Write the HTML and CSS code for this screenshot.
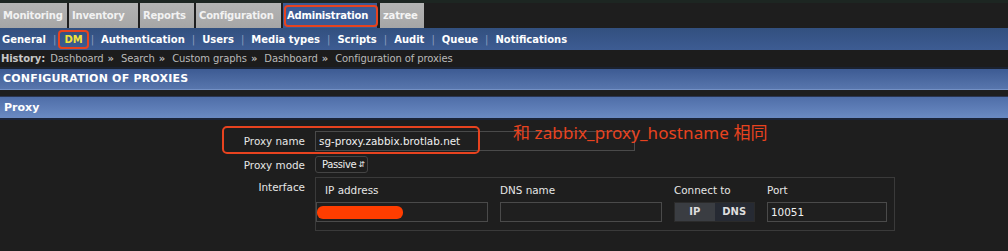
FILE: index.html
```html
<!DOCTYPE html>
<html lang="en">
<head>
    <meta charset="UTF-8">
    <title>Configuration of proxies</title>
    <link rel="stylesheet" href="styles.css">
</head>
<body>

<div class="top-strip"></div>
<div class="main-tabs">
    <div class="main-tab">Monitoring</div>
    <div class="main-tab">Inventory</div>
    <div class="main-tab">Reports</div>
    <div class="main-tab">Configuration</div>
    <div class="main-tab active">Administration<span class="mark mark-tab"></span></div>
    <div class="main-tab">zatree</div>
</div>

<div class="sub-menu">
    <span class="sub-item">General</span><span class="sep">|</span>
    <span class="sub-item current">DM<span class="mark mark-dm"></span></span><span class="sep">|</span>
    <span class="sub-item">Authentication</span><span class="sep">|</span>
    <span class="sub-item">Users</span><span class="sep">|</span>
    <span class="sub-item">Media types</span><span class="sep">|</span>
    <span class="sub-item">Scripts</span><span class="sep">|</span>
    <span class="sub-item">Audit</span><span class="sep">|</span>
    <span class="sub-item">Queue</span><span class="sep">|</span>
    <span class="sub-item">Notifications</span>
</div>

<div class="history">
    <b>History:</b>
    <span>Dashboard</span><i>&raquo;</i>
    <span>Search</span><i>&raquo;</i>
    <span>Custom graphs</span><i>&raquo;</i>
    <span>Dashboard</span><i>&raquo;</i>
    <span>Configuration of proxies</span>
</div>

<div class="page-header">CONFIGURATION OF PROXIES</div>
<div class="form-header">Proxy</div>

<div class="form-body">
    <div class="form-row row-name">
        <label class="form-label">Proxy name</label>
        <div class="form-field">
            <div class="text-input wide">sg-proxy.zabbix.brotlab.net</div>
        </div>
        <span class="mark mark-name"></span>
        <span class="note">和 zabbix_proxy_hostname 相同</span>
    </div>
    <div class="form-row row-mode">
        <label class="form-label">Proxy mode</label>
        <div class="form-field">
            <div class="select-box">Passive<span class="arrows">&#8693;</span></div>
        </div>
    </div>
    <div class="form-row">
        <label class="form-label">Interface</label>
        <div class="form-field">
            <div class="iface">
                <div class="iface-col col-ip">
                    <div class="iface-head">IP address</div>
                    <div class="text-input"><span class="redact"></span></div>
                </div>
                <div class="iface-col col-dns">
                    <div class="iface-head">DNS name</div>
                    <div class="text-input"></div>
                </div>
                <div class="iface-col col-conn">
                    <div class="iface-head">Connect to</div>
                    <div class="toggle"><span class="on">IP</span><span>DNS</span></div>
                </div>
                <div class="iface-col col-port">
                    <div class="iface-head">Port</div>
                    <div class="text-input">10051</div>
                </div>
            </div>
        </div>
    </div>
</div>

</body>
</html>
```

FILE: styles.css
```css
body {
    margin: 0;
    padding: 0;
    background-color: #1e1e1e;
    font-family: "DejaVu Sans", Verdana, sans-serif;
    font-size: 11px;
    color: #e0e0e0;
    overflow: hidden;
}
.top-strip {
    height: 3px;
    background-color: #1d2622;
}
.main-tabs {
    display: flex;
    height: 25px;
    gap: 2px;
}
.main-tab {
    position: relative;
    background: linear-gradient(#b4b4b4, #a6a6a6);
    color: #f2f2f2;
    font-weight: bold;
    font-size: 10px;
    letter-spacing: -0.2px;
    line-height: 25px;
    padding: 0 3px;
}
.main-tab:nth-child(1) { width: 61px; }
.main-tab:nth-child(2) { width: 63px; }
.main-tab:nth-child(3) { width: 48px; }
.main-tab:nth-child(4) { width: 79px; }
.main-tab.active {
    width: 86px;
    background: #3c5a93;
    color: #fff;
    padding: 0 4px;
}
.main-tab:nth-child(6) {
    width: 38px;
    margin-left: 1px;
    color: #f4f4f4;
}
.mark {
    position: absolute;
    border: 2px solid #e8431f;
    border-radius: 4px;
    pointer-events: none;
}
.mark-tab {
    left: 1px;
    right: -1px;
    top: 2px;
    bottom: 1px;
}
.sub-menu {
    height: 22px;
    display: flex;
    align-items: center;
    padding-left: 2px;
    background: linear-gradient(#32507f, #3d5c93);
    color: #fff;
    font-weight: bold;
    font-size: 10px;
}
.sub-item {
    position: relative;
}
.sub-item.current {
    color: #f2e23a;
    padding: 0 1px;
}
.mark-dm {
    left: -5px;
    right: -5px;
    top: -4px;
    bottom: -4px;
}
.sep {
    color: #8a9cbd;
    font-weight: normal;
    padding: 0 7px;
}
.history {
    height: 17px;
    line-height: 17px;
    padding-left: 1px;
    background-color: #1c1c1c;
    color: #b9b9b9;
    font-size: 10px;
    letter-spacing: -0.1px;
    border-bottom: 2px solid #1b2230;
}
.history b {
    color: #c7c7c7;
    margin-right: 2px;
}
.history i {
    font-style: normal;
    font-weight: bold;
    margin: 0 4px;
}
.page-header {
    height: 20px;
    line-height: 20px;
    padding-left: 3px;
    background: linear-gradient(#3d5b93, #5876ad);
    border-bottom: 1px solid #7390c4;
    color: #fff;
    font-weight: bold;
    font-size: 11px;
    letter-spacing: 0.2px;
}
.form-header {
    margin-top: 6px;
    height: 21px;
    line-height: 21px;
    padding-left: 4px;
    background: linear-gradient(#4f6ea8, #6a8ac3);
    border-top: 1px solid #2a3550;
    border-bottom: 2px solid #1b2438;
    color: #fff;
    font-weight: bold;
    font-size: 11px;
}
.form-body {
    padding-top: 11px;
}
.form-row {
    position: relative;
    display: grid;
    grid-template-columns: 305px 1fr;
    column-gap: 10px;
    margin-bottom: 6px;
}
.row-mode {
    margin-top: -2px;
    margin-bottom: 4px;
}
.form-label {
    text-align: right;
    color: #e6e6e6;
    font-size: 10.4px;
    padding-top: 4px;
}
.text-input {
    position: relative;
    box-sizing: border-box;
    height: 20px;
    line-height: 18px;
    padding: 0 3px;
    border: 1px solid #4a4a4a;
    background-color: #1f1f1f;
    color: #f0f0f0;
    font-size: 10.4px;
}
.text-input.wide {
    width: 320px;
}
.mark-name {
    left: 222px;
    top: -5px;
    width: 254px;
    height: 24px;
    border-radius: 5px;
}
.note {
    position: absolute;
    left: 513px;
    top: -12px;
    color: #e8431f;
    font-family: "Noto Sans", "Noto Sans CJK SC", sans-serif;
    font-size: 17px;
    letter-spacing: 0.1px;
}
.select-box {
    display: inline-flex;
    align-items: center;
    gap: 2px;
    box-sizing: border-box;
    height: 17px;
    padding: 0 2px 0 6px;
    margin-top: 1px;
    border: 1px solid #444;
    border-radius: 3px;
    background-color: #1d1d1d;
    color: #eee;
    font-size: 10px;
    white-space: nowrap;
    letter-spacing: -0.4px;
}
.arrows {
    font-size: 8px;
}
.iface {
    display: flex;
    width: 580px;
    box-sizing: border-box;
    border: 1px solid #3a3a3a;
    padding: 0 10px 8px 0;
}
.iface-col {
    margin-right: 12px;
}
.iface-head {
    padding: 6px 0 6px 9px;
    font-size: 10.4px;
    color: #e6e6e6;
}
.col-ip .text-input { width: 172px; }
.col-dns .text-input { width: 162px; }
.col-conn .iface-head { padding-left: 0; }
.col-port .iface-head { padding-left: 0; }
.col-port .text-input { width: 120px; }
.col-port { margin-right: 0; }
.col-dns .iface-head { padding-left: 0; }
.redact {
    position: absolute;
    left: 0;
    top: 3px;
    width: 86px;
    height: 13px;
    border-radius: 6px;
    background-color: #ff3d00;
}
.toggle {
    display: flex;
    height: 20px;
    width: 81px;
    border: 1px solid #2b2b2b;
    box-sizing: border-box;
}
.toggle span {
    flex: 1;
    text-align: center;
    line-height: 18px;
    font-weight: bold;
    font-size: 10px;
    color: #ddd;
    background-color: #262a33;
}
.toggle span.on {
    background-color: #3a3d42;
}
```
